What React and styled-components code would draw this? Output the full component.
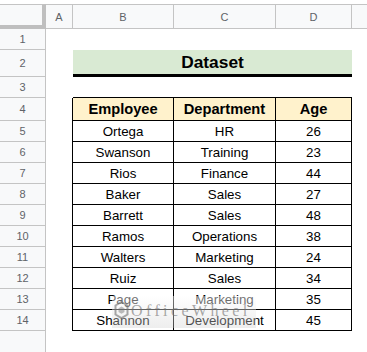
import React from 'react';
import styled, { createGlobalStyle } from 'styled-components';

const GlobalStyle = createGlobalStyle`
  html, body {
    margin: 0;
    padding: 0;
    background: #fff;
  }
  body {
    font-family: "Liberation Sans", Arial, sans-serif;
    overflow: hidden;
  }
`;

const COLUMNS = ['A', 'B', 'C', 'D', ''];

const DATA = [
  ['Ortega', 'HR', 26],
  ['Swanson', 'Training', 23],
  ['Rios', 'Finance', 44],
  ['Baker', 'Sales', 27],
  ['Barrett', 'Sales', 48],
  ['Ramos', 'Operations', 38],
  ['Walters', 'Marketing', 24],
  ['Ruiz', 'Sales', 34],
  ['Page', 'Marketing', 35],
  ['Shannon', 'Development', 45]
];

const Sheet = styled.div`
  position: relative;
  display: grid;
  grid-template-columns: 46px 27px 101px 102px 76px 1fr;
  grid-template-rows: 4px 25px 21px 27px 21px 23px repeat(10, 21px) 1fr;
  width: 367px;
  height: 352px;
  overflow: hidden;
`;

const TopStrip = styled.div`
  grid-column: 1 / -1;
  background: #fff;
`;

const Corner = styled.div`
  background: #f8f9fa;
  border-top: 1px solid #c4c4c4;
  border-right: 4px solid #bfbfbf;
  border-bottom: 4px solid #bfbfbf;
`;

const ColHead = styled.div`
  display: flex;
  align-items: center;
  justify-content: center;
  background: #f8f9fa;
  border-top: 1px solid #c4c4c4;
  border-bottom: 1px solid #c4c4c4;
  border-right: ${({ $last }) => ($last ? 'none' : '1px solid #c4c4c4')};
  color: #5f6368;
  font-size: 11px;
`;

const RowHead = styled.div`
  display: flex;
  align-items: center;
  justify-content: center;
  background: #f8f9fa;
  border-right: 1px solid #c4c4c4;
  border-bottom: ${({ $filler }) => ($filler ? 'none' : '1px solid #c4c4c4')};
  color: #5f6368;
  font-size: 11px;
`;

const Cell = styled.div`
  display: flex;
  align-items: center;
  justify-content: center;
  background: ${({ $head }) => ($head ? '#fff2cc' : '#fff')};
  border-right: ${({ $right }) => ($right ? '1px solid #000' : 'none')};
  border-bottom: ${({ $bottom }) => ($bottom ? '1px solid #000' : 'none')};
  color: #000;
  font-size: ${({ $head }) => ($head ? '14.67px' : '13.33px')};
  font-weight: ${({ $head }) => ($head ? 700 : 400)};
  white-space: nowrap;
`;

const Title = styled.div`
  grid-column: span 3;
  display: flex;
  align-items: center;
  justify-content: center;
  background: #d9ead3;
  border-bottom: 3px solid #000;
  color: #000;
  font-size: 17.33px;
  font-weight: 700;
`;

const Blank = styled.div`
  grid-column: 2 / -1;
  background: #fff;
`;

/* translucent site watermark lying over rows 13-14 */
const Watermark = styled.div`
  position: absolute;
  left: 112px;
  top: 296px;
  width: 144px;
  height: 32px;
  box-sizing: border-box;
  display: flex;
  align-items: center;
  gap: 2px;
  padding: 0 0 2px 2px;
  background: linear-gradient(rgba(255, 255, 255, 0.45), rgba(205, 205, 205, 0.35));
  pointer-events: none;
`;

const MarkText = styled.span`
  font-family: "Liberation Serif", "DejaVu Serif", serif;
  font-size: 16px;
  letter-spacing: 3.4px;
  color: rgba(110, 110, 110, 0.6);
`;

const Logo = () => (
  <svg width="15" height="22" viewBox="0 0 15 22" fill="none">
    <path d="M7.5 2 L13.5 5.5 V14.5 L7.5 18 L1.5 14.5 V5.5 Z" stroke="rgba(110,110,110,0.6)" strokeWidth="2" />
    <path d="M7.5 6.5 L10.5 8.2 V12 L7.5 13.8 L4.5 12 V8.2 Z" fill="rgba(110,110,110,0.45)" />
  </svg>
);

const App = () => {
  const rows = [];

  rows.push(
    <React.Fragment key="r1">
      <RowHead>1</RowHead>
      {COLUMNS.map((c) => <Cell key={c || 'e'} />)}
    </React.Fragment>
  );

  rows.push(
    <React.Fragment key="r2">
      <RowHead>2</RowHead>
      <Cell />
      <Title>Dataset</Title>
      <Cell />
    </React.Fragment>
  );

  rows.push(
    <React.Fragment key="r3">
      <RowHead>3</RowHead>
      <Cell />
      <Cell $bottom />
      <Cell $bottom />
      <Cell $bottom />
      <Cell />
    </React.Fragment>
  );

  rows.push(
    <React.Fragment key="r4">
      <RowHead>4</RowHead>
      <Cell $right />
      <Cell $head $right $bottom>Employee</Cell>
      <Cell $head $right $bottom>Department</Cell>
      <Cell $head $right $bottom>Age</Cell>
      <Cell />
    </React.Fragment>
  );

  DATA.forEach(([name, dept, age], i) => {
    rows.push(
      <React.Fragment key={name + i}>
        <RowHead>{i + 5}</RowHead>
        <Cell $right />
        <Cell $right $bottom>{name}</Cell>
        <Cell $right $bottom>{dept}</Cell>
        <Cell $right $bottom>{age}</Cell>
        <Cell />
      </React.Fragment>
    );
  });

  return (
    <>
      <GlobalStyle />
      <Sheet>
        <TopStrip />
        <Corner />
        {COLUMNS.map((c, i) => (
          <ColHead key={c || 'e'} $last={i === COLUMNS.length - 1}>{c}</ColHead>
        ))}
        {rows}
        <RowHead $filler />
        <Blank />
        <Watermark>
          <Logo />
          <MarkText>OfficeWheel</MarkText>
        </Watermark>
      </Sheet>
    </>
  );
};

export default App;
